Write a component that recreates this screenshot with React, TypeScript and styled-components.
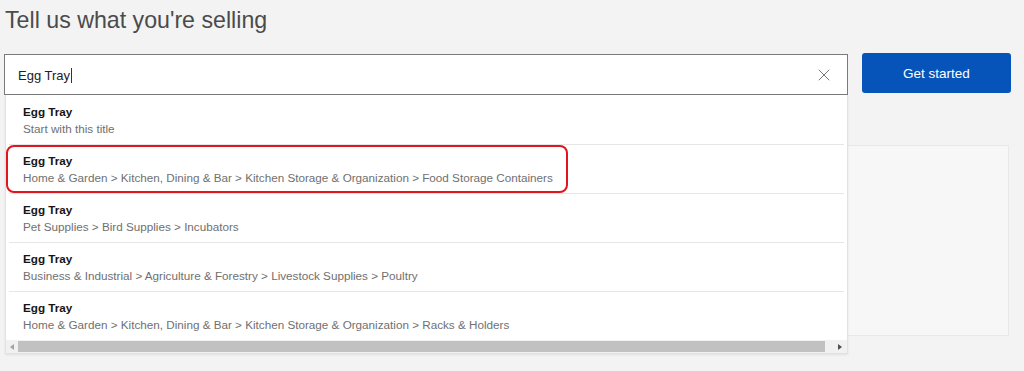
import styled, { createGlobalStyle } from "styled-components";
import { X } from "lucide-react";

const GlobalStyle = createGlobalStyle`
  html, body {
    margin: 0;
    padding: 0;
    background: #f3f3f3;
    font-family: "Liberation Sans", Arial, sans-serif;
  }
  * {
    box-sizing: border-box;
  }
`;

const Page = styled.main`
  width: 1024px;
  height: 371px;
  padding: 7px 13px 0 4px;
  overflow: hidden;
`;

const Heading = styled.h1`
  margin: 0 0 21px 1px;
  font-size: 23.2px;
  line-height: 26px;
  font-weight: 400;
  color: #4b4b4b;
`;

const SearchRow = styled.div`
  display: flex;
  align-items: flex-start;
  gap: 14px;
`;

const SearchBox = styled.div`
  position: relative;
  flex: 0 0 844px;
`;

const InputField = styled.div`
  display: flex;
  align-items: center;
  height: 41px;
  padding: 0 13px 0 13px;
  background: #fff;
  border: 1px solid #7a7a7a;
  font-size: 13px;
  color: #222;
`;

const InputText = styled.span`
  flex: 1;
  display: flex;
  align-items: center;
  padding-top: 1px;
`;

const Caret = styled.span`
  display: inline-block;
  width: 1px;
  height: 15px;
  margin-left: 1px;
  background: #333;
`;

const ClearIcon = styled(X)`
  color: #767676;
`;

const StartButton = styled.button`
  flex: 0 0 149px;
  height: 40px;
  margin-top: -1px;
  border: none;
  border-radius: 3px;
  background: #0654ba;
  color: #fff;
  font-family: inherit;
  font-size: 13.5px;
`;

const Panel = styled.section`
  height: 191px;
  margin: 50px 2px 0 1px;
  background: #f7f7f7;
  border: 1px solid #e8e8e8;
`;

const Dropdown = styled.div`
  position: absolute;
  top: 100%;
  left: 1px;
  width: 843px;
  padding-top: 1px;
  background: #fff;
  border: 1px solid #e2e2e2;
  border-top: none;
  box-shadow: 0 1px 2px rgba(0, 0, 0, 0.08);
  z-index: 2;
`;

const SuggestionList = styled.ul`
  list-style: none;
  margin: 0 3px;
  padding: 0;
`;

const Suggestion = styled.li`
  position: relative;
  padding: 8px 0 7px 14px;
  border-bottom: 1px solid #e6e6e6;
  white-space: nowrap;
  &:last-child {
    border-bottom: none;
  }
`;

const SuggestionTitle = styled.div`
  font-size: 11.7px;
  line-height: 16px;
  font-weight: 700;
  color: #151515;
`;

const SuggestionPath = styled.div`
  font-size: 11.7px;
  line-height: 17px;
  color: #707070;
`;

const Highlight = styled.span`
  position: absolute;
  left: -3px;
  top: 0;
  width: 562px;
  height: 48px;
  border: 2px solid #e0161e;
  border-radius: 8px;
  pointer-events: none;
`;

const Scrollbar = styled.div`
  display: flex;
  align-items: center;
  height: 13px;
  background: #f1f1f1;
`;

const ScrollArrow = styled.div<{ $dir: "left" | "right" }>`
  flex: 0 0 ${(p) => (p.$dir === "left" ? "12px" : "22px")};
  display: flex;
  align-items: center;
  justify-content: ${(p) => (p.$dir === "left" ? "center" : "flex-end")};
  padding-right: ${(p) => (p.$dir === "left" ? "0" : "5px")};
  &::after {
    content: "";
    width: 0;
    height: 0;
    border-top: 3.5px solid transparent;
    border-bottom: 3.5px solid transparent;
    ${(p) =>
      p.$dir === "left"
        ? "border-right: 4px solid #a3a3a3;"
        : "border-left: 4px solid #505050;"}
  }
`;

const ScrollThumb = styled.div`
  flex: 1;
  height: 11px;
  background: #c1c1c1;
`;

const suggestions = [
  { title: "Egg Tray", path: "Start with this title" },
  {
    title: "Egg Tray",
    path: "Home & Garden > Kitchen, Dining & Bar > Kitchen Storage & Organization > Food Storage Containers",
    marked: true,
  },
  { title: "Egg Tray", path: "Pet Supplies > Bird Supplies > Incubators" },
  {
    title: "Egg Tray",
    path: "Business & Industrial > Agriculture & Forestry > Livestock Supplies > Poultry",
  },
  {
    title: "Egg Tray",
    path: "Home & Garden > Kitchen, Dining & Bar > Kitchen Storage & Organization > Racks & Holders",
  },
];

const App = () => {
  return (
    <>
      <GlobalStyle />
      <Page>
        <Heading>Tell us what you're selling</Heading>
        <SearchRow>
          <SearchBox>
            <InputField>
              <InputText>
                Egg Tray
                <Caret />
              </InputText>
              <ClearIcon size={20} strokeWidth={1.2} />
            </InputField>
            <Dropdown>
              <SuggestionList>
                {suggestions.map((item, i) => (
                  <Suggestion key={i}>
                    <SuggestionTitle>{item.title}</SuggestionTitle>
                    <SuggestionPath>{item.path}</SuggestionPath>
                    {item.marked && <Highlight />}
                  </Suggestion>
                ))}
              </SuggestionList>
              <Scrollbar>
                <ScrollArrow $dir="left" />
                <ScrollThumb />
                <ScrollArrow $dir="right" />
              </Scrollbar>
            </Dropdown>
          </SearchBox>
          <StartButton>Get started</StartButton>
        </SearchRow>
        <Panel />
      </Page>
    </>
  );
};

export default App;
